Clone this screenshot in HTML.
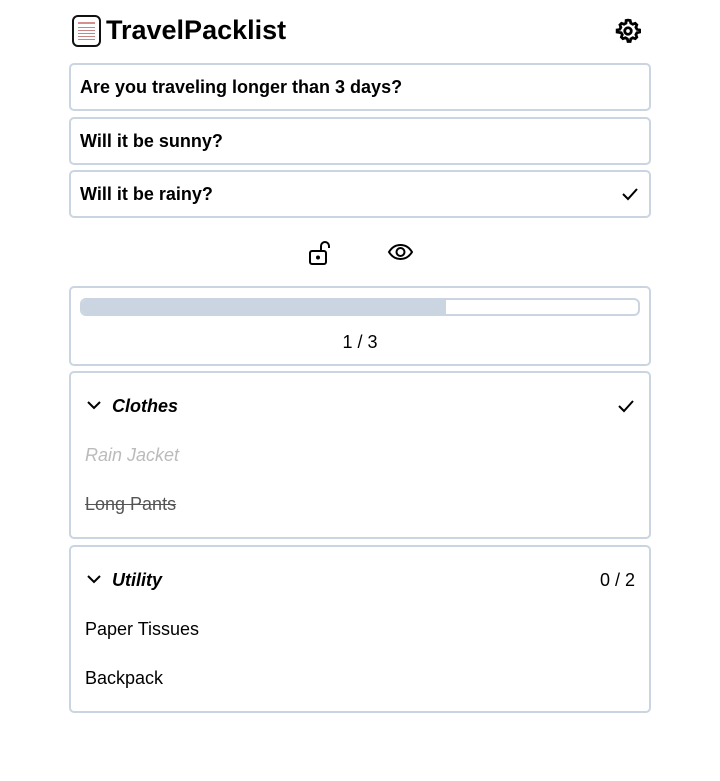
<!DOCTYPE html>
<html><head><meta charset="utf-8"><style>
body{margin:0;width:720px;height:781px;background:#fff;font-family:"Liberation Sans",sans-serif;position:relative;overflow:hidden;color:#000}
.a{position:absolute}
.card{position:absolute;left:69px;width:582px;box-sizing:border-box;border:2px solid #cbd5e1;border-radius:5px;background:#fff}
.q{font-weight:bold;font-size:18px;line-height:44px;padding-left:9px;height:48px}
.it{position:absolute;left:14px;font-size:18px}
</style></head><body>
<div class="a" style="left:72px;top:15px;width:29px;height:32px;border:2.5px solid #111;border-radius:6px;background:#fff;box-sizing:border-box">
<div style="margin:5px 4px;height:2px;background:#b44;opacity:.6"></div>
<div style="margin:-2px 4px 2px;height:1px;background:#a33;opacity:.6;box-shadow:0 3px #a33,0 6px #a33,0 9px #a33,0 12px #a33"></div>
</div>
<div class="a" style="left:106px;top:15px;font-size:27px;font-weight:bold">TravelPacklist</div>
<svg class="a" style="left:615px;top:18px" width="26" height="26" viewBox="0 0 24 24" fill="none" stroke="#000" stroke-width="2.6"><path d="M12 2l2 .3.6 2.4 1.8 1 2.3-.8 1.4 1.4-.8 2.3 1 1.8 2.4.6v2l-2.4.6-1 1.8.8 2.3-1.4 1.4-2.3-.8-1.8 1-.6 2.4h-2l-.6-2.4-1.8-1-2.3.8-1.4-1.4.8-2.3-1-1.8L2 13v-2l2.4-.6 1-1.8-.8-2.3 1.4-1.4 2.3.8 1.8-1L10.3 2.3z"/><circle cx="12" cy="12" r="3"/></svg>

<div class="card q" style="top:63px">Are you traveling longer than 3 days?</div>
<div class="card q" style="top:117px">Will it be sunny?</div>
<div class="card q" style="top:170px">Will it be rainy?<svg class="a" style="right:10px;top:15px" width="18" height="14" viewBox="0 0 18 14" fill="none" stroke="#000" stroke-width="2"><path d="M2 7l5 5L16 2"/></svg></div>

<svg class="a" style="left:308px;top:240px" width="26" height="26" viewBox="0 0 26 26" fill="none" stroke="#000" stroke-width="2"><rect x="2" y="11" width="16" height="13" rx="2"/><path d="M13 11V6a4 4 0 0 1 8 0v2"/><circle cx="10" cy="17.5" r="1" fill="#000"/></svg>
<svg class="a" style="left:387px;top:240px" width="27" height="24" viewBox="0 0 27 24" fill="none" stroke="#000" stroke-width="2"><path d="M2 12c3-5 7-7 11.5-7S22 7 25 12c-3 5-7 7-11.5 7S5 17 2 12z"/><circle cx="13.5" cy="12" r="4"/></svg>

<div class="card" style="top:286px;height:80px">
<div class="a" style="left:9px;top:10px;width:560px;height:18px;box-sizing:border-box;border:2px solid #cbd5e1;border-radius:6px;overflow:hidden"><div style="width:364px;height:100%;background:#cbd5e1"></div></div>
<div class="a" style="left:0;width:100%;top:44px;text-align:center;font-size:18px">1 / 3</div>
</div>

<div class="card" style="top:371px;height:168px">
<svg class="a" style="left:15px;top:26px" width="16" height="12" viewBox="0 0 16 12" fill="none" stroke="#000" stroke-width="2"><path d="M2 3l6 6 6-6"/></svg>
<div class="a" style="left:41px;top:23px;font-size:18px;font-weight:bold;font-style:italic">Clothes</div>
<svg class="a" style="right:14px;top:26px" width="18" height="14" viewBox="0 0 18 14" fill="none" stroke="#000" stroke-width="2"><path d="M2 7l5 5L16 2"/></svg>
<div class="it" style="top:72px;color:#bbb;font-style:italic">Rain Jacket</div>
<div class="it" style="top:121px;color:#555;text-decoration:line-through">Long Pants</div>
</div>

<div class="card" style="top:545px;height:168px">
<svg class="a" style="left:15px;top:26px" width="16" height="12" viewBox="0 0 16 12" fill="none" stroke="#000" stroke-width="2"><path d="M2 3l6 6 6-6"/></svg>
<div class="a" style="left:41px;top:23px;font-size:18px;font-weight:bold;font-style:italic">Utility</div>
<div class="a" style="right:14px;top:23px;font-size:18px">0 / 2</div>
<div class="it" style="top:72px">Paper Tissues</div>
<div class="it" style="top:121px">Backpack</div>
</div>
</body></html>
